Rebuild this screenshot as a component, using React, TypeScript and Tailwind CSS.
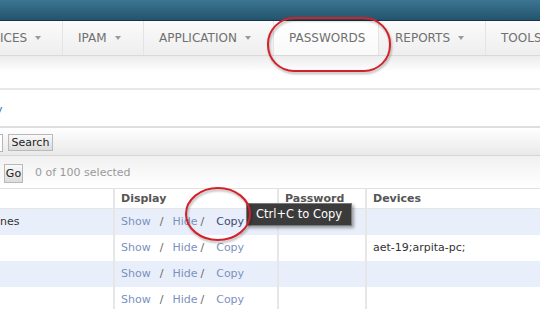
import React from "react";

const font = { fontFamily: '"DejaVu Sans", Verdana, sans-serif' };

const Arrow = () => (
  <span className="ml-[8px] inline-block h-0 w-0 shrink-0 border-x-[3px] border-t-[4px] border-x-transparent border-t-[#9a9a9a]" />
);

const NavItem: React.FC<{ label: string; arrow?: boolean; active?: boolean; className?: string }> = ({
  label,
  arrow = true,
  active = false,
  className = "",
}) => (
  <div
    className={`flex h-full shrink-0 items-center whitespace-nowrap border-r border-[#e4e4e4] text-[12px] text-[#707070] ${
      active ? "bg-gradient-to-b from-white to-[#f9f9f9]" : ""
    } ${className}`}
  >
    <span>{label}</span>
    {arrow && <Arrow />}
  </div>
);

const Links: React.FC<{ hover?: boolean }> = ({ hover }) => (
  <div className="flex items-center pl-[6px] text-[11px]">
    <span className="text-[#7b91c0]">Show</span>
    <span className="ml-[9px] text-[#666]">/</span>
    <span className="ml-[9px] text-[#7b91c0]">Hide</span>
    <span className="ml-[3px] text-[#666]">/</span>
    <span className={`ml-[12px] ${hover ? "text-[#3c4a72]" : "text-[#7b91c0]"}`}>Copy</span>
  </div>
);

const rows = [
  { name: "nes", devices: "", blue: true, hover: true },
  { name: "", devices: "aet-19;arpita-pc;", blue: false },
  { name: "", devices: "", blue: true },
  { name: "", devices: "", blue: false },
];

export default function App() {
  return (
    <div className="relative h-[309px] w-[540px] overflow-hidden bg-white" style={font}>
      {/* top bar */}
      <div className="h-[21px] border-b border-[#163548] bg-gradient-to-b from-[#3c7592] to-[#24546d]" />

      {/* nav */}
      <div className="h-[35px] overflow-hidden border-b border-[#d9d9d9] bg-gradient-to-b from-[#fbfbfb] to-[#eeeeee]">
        <div className="flex h-full w-[600px] items-stretch">
          <NavItem label="ICES" className="w-[63px]" />
          <NavItem label="IPAM" className="w-[81px] pl-[15px]" />
          <NavItem label="APPLICATION" className="w-[130px] pl-[15px]" />
          <NavItem label="PASSWORDS" arrow={false} active className="w-[105px] pl-[15px]" />
          <NavItem label="REPORTS" className="w-[107px] pl-[16px]" />
          <NavItem label="TOOLS" arrow={false} className="w-[80px] pl-[15px]" />
        </div>
      </div>

      <div className="h-[32px] bg-gradient-to-b from-[#ececec] via-white to-white" />
      <div className="h-[2px] bg-[#e8e8e8]" />

      <div className="flex h-[36px] items-center pt-[4px]">
        <span className="-ml-[4px] text-[11px] text-[#2f6fb0]">y</span>
      </div>
      <div className="h-[2px] bg-[#dedede]" />

      {/* search toolbar */}
      <div className="flex h-[28px] items-center gap-[5px] border-b border-[#d6d6d6] bg-gradient-to-b from-white to-[#e9e9e9] pt-[2px]">
        <div className="h-[18px] w-[3px] border border-l-0 border-[#b5b5b5] bg-white" />
        <button className="h-[17px] w-[45px] border border-[#b9b9b9] bg-gradient-to-b from-[#fafafa] to-[#dcdcdc] text-[11px] leading-none text-[#222]">
          Search
        </button>
      </div>

      {/* bulk actions */}
      <div className="flex h-[32px] items-center bg-gradient-to-b from-[#f1f1f1] to-white pl-[4px] pt-[3px]">
        <button className="h-[19px] w-[19px] border border-[#b9b9b9] bg-gradient-to-b from-[#fafafa] to-[#dcdcdc] text-[11px] leading-none text-[#222]">
          Go
        </button>
        <span className="ml-[12px] text-[11px] text-[#9a9a9a]">0 of 100 selected</span>
      </div>

      {/* table */}
      <div className="grid grid-cols-[115px_164px_88px_1fr] border-t border-[#e2e2e2] text-[11px]">
        <div className="h-[20px] border-b border-r-2 border-[#e6e6e6]" />
        <div className="flex h-[20px] items-center border-b border-r-2 border-[#e6e6e6] pl-[6px] pt-[2px] font-bold text-[#555]">
          Display
        </div>
        <div className="flex h-[20px] items-center border-b border-r-2 border-[#e6e6e6] pl-[6px] pt-[2px] font-bold text-[#555]">
          Password
        </div>
        <div className="flex h-[20px] items-center border-b border-[#e6e6e6] pl-[6px] pt-[2px] font-bold text-[#555]">
          Devices
        </div>
        {rows.map((r, i) => (
          <React.Fragment key={i}>
            <div
              className={`flex h-[26px] items-center border-r-2 border-[#e6e6e6] pt-[1px] text-[#333] ${
                r.blue ? "bg-[#e9effa]" : "bg-white"
              }`}
            >
              {r.name}
            </div>
            <div className={`flex h-[26px] items-center border-r-2 border-[#e6e6e6] pt-[1px] ${r.blue ? "bg-[#e9effa]" : "bg-white"}`}>
              <Links hover={r.hover} />
            </div>
            <div className={`h-[26px] border-r-2 border-[#e6e6e6] ${r.blue ? "bg-[#e9effa]" : "bg-white"}`} />
            <div className={`flex h-[26px] items-center pl-[6px] pt-[1px] text-[#333] ${r.blue ? "bg-[#e9effa]" : "bg-white"}`}>
              {r.devices}
            </div>
          </React.Fragment>
        ))}
      </div>

      {/* tooltip */}
      <div className="absolute left-[246px] top-[203px] flex h-[23px] w-[106px] items-center justify-center border border-[#7a7a7a] bg-[#3b3b3b] text-[11.5px] text-white shadow-[2px_2px_3px_rgba(0,0,0,0.35)]">
        Ctrl+C to Copy
      </div>

      {/* annotation ovals */}
      <svg className="pointer-events-none absolute inset-0" width="540" height="309">
        <defs>
          <filter id="sh" x="-10%" y="-10%" width="120%" height="130%">
            <feDropShadow dx="1" dy="2" stdDeviation="1.2" floodColor="#000" floodOpacity="0.3" />
          </filter>
        </defs>
        <rect x="268" y="18" width="122" height="53" rx="26" ry="26" fill="none" stroke="#d1222c" strokeWidth="2" filter="url(#sh)" />
        <ellipse cx="218" cy="214" rx="32" ry="26" fill="none" stroke="#d1222c" strokeWidth="2" filter="url(#sh)" />
      </svg>
    </div>
  );
}
